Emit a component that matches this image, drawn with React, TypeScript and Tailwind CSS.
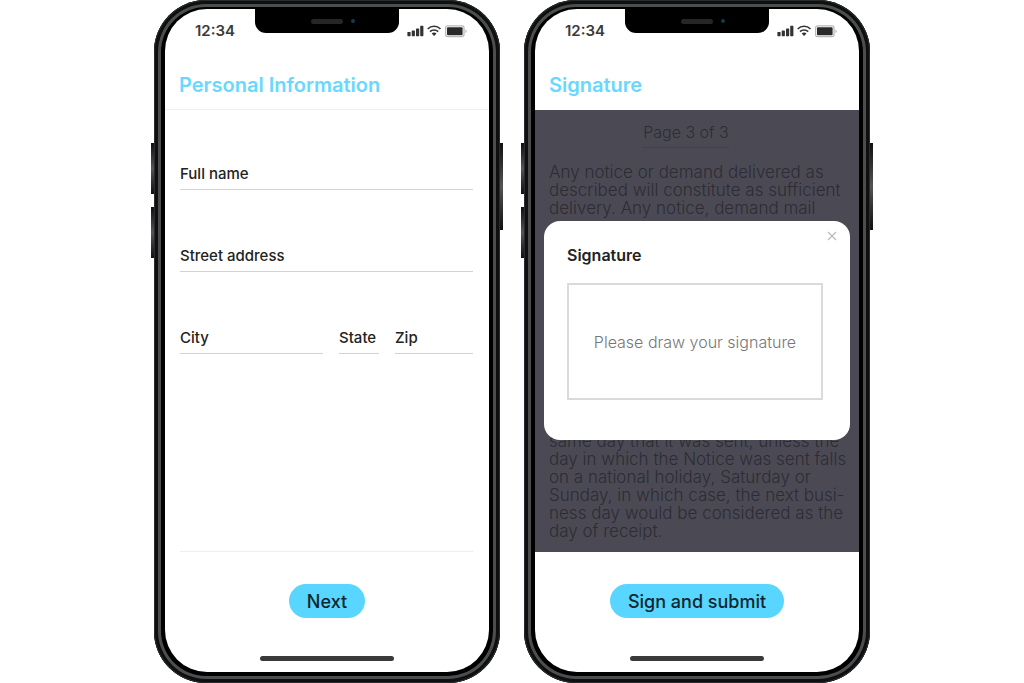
import React from 'react';

interface PhoneProps {
  title: string;
  action: string;
  formId: string;
  dimmed?: boolean;
  children: React.ReactNode;
}

function StatusIcons() {
  return (
    <svg className="h-3.5 w-[60px]" viewBox="0 0 60 14" aria-hidden="true">
      <g fill="#333">
        <rect x="0.4" y="8" width="3.2" height="4.2" rx="0.6" />
        <rect x="4.7" y="6.4" width="3.2" height="5.8" rx="0.6" />
        <rect x="9" y="4.4" width="3.2" height="7.8" rx="0.6" />
        <rect x="13.2" y="1.8" width="3.2" height="10.4" rx="0.6" />
      </g>
      <g fill="none" stroke="#333" strokeWidth="1.6">
        <path d="M20.7 5C24.2 1.4 30 1.4 33.5 5" />
        <path d="M23 7.6C25.3 5.4 28.9 5.4 31.2 7.6" />
      </g>
      <path d="M24.7 9.4c1.4-1.2 3.4-1.2 4.8 0l-2.4 2.6z" fill="#333" />
      <rect x="38.6" y="1.8" width="18.4" height="10.8" rx="2" fill="#fff" stroke="#b9b9b9" strokeWidth="1.3" />
      <rect x="40" y="3.2" width="15.6" height="8" rx="1" fill="#2a2a2a" />
      <path d="M58.4 5.6v3.4c.9-.3 1.3-.9 1.3-1.7s-.4-1.4-1.3-1.7z" fill="#b9b9b9" />
    </svg>
  );
}

function Notch() {
  return (
    <div className="absolute top-0 left-1/2 flex h-6 w-36 -translate-x-1/2 items-center justify-center rounded-b-[11px] bg-black">
      <span className="h-[5px] w-8 rounded-full bg-[#262626]" />
      <span className="ml-2 mr-[-12px] h-1 w-1 rounded-full bg-[#153a4d]" />
    </div>
  );
}

function Phone({ title, action, formId, dimmed, children }: PhoneProps) {
  return (
    <div className="relative flex min-h-screen w-full max-w-[346px]">
      <span className="absolute top-[143px] -left-[3px] h-[51px] w-1 bg-linear-to-b from-[#111] via-[#555] to-[#111]" />
      <span className="absolute top-[207px] -left-[3px] h-[51px] w-1 bg-linear-to-b from-[#111] via-[#555] to-[#111]" />
      <span className="absolute top-[143px] -right-[3px] h-[87px] w-1 bg-linear-to-b from-[#111] via-[#555] to-[#111]" />
      <div className="relative flex w-full rounded-[52px] bg-black px-[11px] pt-[9px] pb-[11px] shadow-[inset_0_0_0_1px_#2b2c2f,inset_0_0_0_4px_#0e0f11,inset_0_0_0_7px_#4c4d4d]">
        <div className="relative flex w-full flex-col overflow-hidden rounded-[42px] bg-white">
          <Notch />
          <div className="flex h-11 items-center justify-between pr-[22px] pl-[30px]">
            <span className="text-[15px] font-semibold text-[#3a3a3a]">12:34</span>
            <StatusIcons />
          </div>
          <header className={dimmed ? 'h-[57px] px-3.5 pt-[18px]' : 'h-[57px] border-b border-[#eee] px-3.5 pt-[18px]'}>
            <h1 className="text-[20px] leading-7 font-semibold text-[#68d8ff]">{title}</h1>
          </header>
          {children}
          <footer className="flex flex-col items-center">
            <button
              type="submit"
              form={formId}
              className="mt-8 h-[34px] rounded-full bg-[#58d6ff] px-[18px] text-[18px] font-medium text-[#10262e]"
            >
              {action}
            </button>
            <div className="mt-[38px] mb-[11px] h-[5px] w-[134px] rounded-full bg-[#3a3a3a]" />
          </footer>
        </div>
      </div>
    </div>
  );
}

function Field({ label, className }: { label: string; className: string }) {
  return (
    <input
      type="text"
      aria-label={label}
      placeholder={label}
      className={`h-8 min-w-0 border-b border-[#d2d2d2] text-[15px] font-medium text-[#222] outline-none placeholder:text-[#222] ${className}`}
    />
  );
}

function PersonalForm() {
  return (
    <form
      id="personal"
      onSubmit={(e) => e.preventDefault()}
      className="mr-4 ml-[15px] flex flex-1 flex-col gap-[50px] border-b border-[#eee] pt-12"
    >
      <Field label="Full name" className="w-full" />
      <Field label="Street address" className="w-full" />
      <div className="flex gap-4">
        <Field label="City" className="flex-1" />
        <Field label="State" className="w-10" />
        <Field label="Zip" className="w-[78px]" />
      </div>
    </form>
  );
}

function SignatureModal() {
  return (
    <form
      id="signature"
      role="dialog"
      aria-label="Signature"
      onSubmit={(e) => e.preventDefault()}
      className="absolute inset-x-[9px] top-[111px] rounded-2xl bg-white px-[23px] pt-[22px] pb-10"
    >
      <button type="button" aria-label="Close" className="absolute top-2.5 right-[13px] text-[#bbb]">
        <svg className="h-2.5 w-2.5" viewBox="0 0 10 10" stroke="currentColor" strokeWidth="1.2">
          <path d="M1 1l8 8M9 1l-8 8" />
        </svg>
      </button>
      <h2 className="text-[16px] leading-6 font-semibold text-[#222]">Signature</h2>
      <div className="mt-4 mr-1 flex h-[117px] items-center justify-center border-2 border-[#dadada] text-[16px] font-light text-[#777]">
        Please draw your signature
      </div>
    </form>
  );
}

function Agreement() {
  return (
    <main className="relative flex flex-1 flex-col justify-between bg-[#4b4a54] px-3.5 pt-[10px] pb-3 text-[#2d2c35]">
      <div className="flex flex-col">
        <p className="mr-[22px] self-center border-b border-[#42414a] pb-[3px] text-[16px] leading-6 font-light">Page 3 of 3</p>
        <p className="mt-[15px] text-[17px] leading-[18px] font-light whitespace-nowrap">
          Any notice or demand delivered as<br />
          described will constitute as sufficient<br />
          delivery. Any notice, demand mail
        </p>
      </div>
      <p className="text-[17px] leading-[18px] font-light whitespace-nowrap">
        same day that it was sent, unless the<br />
        day in which the Notice was sent falls<br />
        on a national holiday, Saturday or<br />
        Sunday, in which case, the next busi-<br />
        ness day would be considered as the<br />
        day of receipt.
      </p>
      <SignatureModal />
    </main>
  );
}

export default function App() {
  return (
    <div className="flex min-h-screen justify-center gap-6 bg-white font-['Inter',sans-serif]">
      <Phone title="Personal Information" action="Next" formId="personal">
        <PersonalForm />
      </Phone>
      <Phone title="Signature" action="Sign and submit" formId="signature" dimmed>
        <Agreement />
      </Phone>
    </div>
  );
}
